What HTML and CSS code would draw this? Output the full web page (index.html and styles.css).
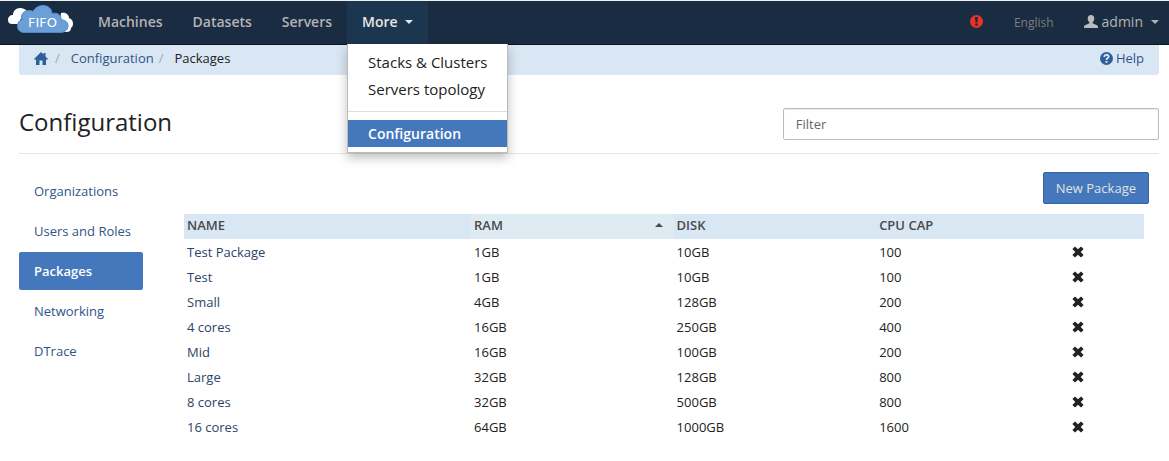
FILE: index.html
```html
<!DOCTYPE html>
<html lang="en">
<head>
<meta charset="utf-8">
<title>FIFO - Packages</title>
<link rel="stylesheet" href="styles.css">
</head>
<body>
<svg class="sprite" aria-hidden="true">
  <symbol id="remove" viewBox="0 0 12 12"><path d="M3 .4 6 3.3 9 .4 11.6 3 8.700 6l2.900 3L9 11.600 6 8.700 3 11.600.4 9l2.900-3L.4 3z"/></symbol>
</svg>
<header class="navbar">
  <a class="brand" href="#" aria-label="FIFO">
    <svg width="66" height="30" viewBox="0 0 66 30">
      <path fill="#fff" d="M12 19H4c-2 0-4-1-4-4 0-3 2-5 5-5C5 6 8 3 12 3c3 0 5 1 7 3l-7 9zM53 8c4-1 8 1 8 5 3 1 4 3 4 6 0 2-1 3-2 4 0 3-2 4-5 4h-7z"/>
      <path fill="#6a9fd8" stroke="#4f8ac8" stroke-width="1" d="M16 27.500c-4 0-6.500-3-6.500-6 0-4 1.500-6 4.500-7-2-5 2-9 7-9 2 0 3 0 4 1 2-4 6-6 10-6 5 0 9 3 9 8 5-1 9 1 9 5v1c5 1 7 3 7 6 0 4-3 7-7 7z"/>
      <text class="brand-text" x="20" y="22">FIFO</text>
    </svg>
  </a>
  <nav class="menu">
    <a class="menu-link" href="#">Machines</a>
    <a class="menu-link" href="#">Datasets</a>
    <a class="menu-link" href="#">Servers</a>
    <div class="dropdown">
      <button class="menu-link open" type="button" aria-expanded="true">More <span class="caret"></span></button>
      <div class="dropdown-menu">
        <a class="dropdown-item" href="#">Stacks &amp; Clusters</a>
        <a class="dropdown-item" href="#">Servers topology</a>
        <hr class="divider">
        <a class="dropdown-item current" href="#">Configuration</a>
      </div>
    </div>
  </nav>
  <div class="account">
    <svg class="alert" width="13" height="13" viewBox="0 0 13 13" role="img" aria-label="Alert"><circle cx="6.5" cy="6.5" r="6.5" fill="#ea3323"/><path fill="#192c42" d="M5 2h3l-.5 5.500h-2zM5.300 8.500h2.400v2.300H5.300z"/></svg>
    <a class="language" href="#">English</a>
    <button class="user" type="button">
      <svg width="14" height="13" viewBox="0 0 14 13"><path fill="#bbb" d="M7 0c2 0 3.300 1.300 3.300 3.500 0 1.800-.8 3-1.700 3.800v1l4.400 2c.8.400 1 1 1 2.700H0c0-1.700.2-2.300 1-2.700l4.400-2v-1c-.9-.8-1.700-2-1.700-3.800C3.700 1.300 5 0 7 0z"/></svg>
      admin <span class="caret"></span>
    </button>
  </div>
</header>
<main class="page">
  <div class="breadcrumb">
    <a class="home" href="#" aria-label="Home"><svg width="14" height="13" viewBox="0 0 14 13"><path fill="#2f5f9b" d="M7 0l2.500 2.500V1h2v3.500L14 7l-1 1-1-1v6H8.500V8.500h-3V13H2V7L1 8 0 7z"/></svg></a>
    <span class="slash">/</span>
    <a class="crumb" href="#">Configuration</a>
    <span class="slash">/</span>
    <span class="crumb-current">Packages</span>
    <a class="help" href="#"><svg width="13" height="13" viewBox="0 0 13 13"><circle cx="6.500" cy="6.500" r="6.500" fill="#2f5f9b"/><path fill="none" stroke="#d9e6f3" stroke-width="1.800" d="M4.300 5c0-3 4.400-2.800 4.400-.4C8.700 6.200 6.500 6 6.500 8"/><path fill="#d9e6f3" d="M5.500 9h2v1.800h-2z"/></svg>Help</a>
  </div>
  <div class="title-row">
    <h1 class="title">Configuration</h1>
    <input class="filter" type="text" placeholder="Filter" aria-label="Filter">
  </div>
  <div class="content">
    <nav class="sidebar">
      <a class="side-link" href="#">Organizations</a>
      <a class="side-link" href="#">Users and Roles</a>
      <a class="side-link active" href="#">Packages</a>
      <a class="side-link" href="#">Networking</a>
      <a class="side-link" href="#">DTrace</a>
    </nav>
    <section class="main">
      <button class="new" type="button">New Package</button>
      <table class="packages">
        <colgroup><col class="col-name"><col class="col-size"><col class="col-size"><col class="col-cap"><col></colgroup>
        <thead><tr><th>NAME</th><th class="sorted" aria-sort="ascending"><span class="sort-label">RAM<span class="sort-arrow"></span></span></th><th>DISK</th><th>CPU CAP</th><th></th></tr></thead>
        <tbody>
          <tr><td><a href="#">Test Package</a></td><td>1GB</td><td>10GB</td><td>100</td><td><button class="remove" type="button" aria-label="Delete Test Package"><svg width="12" height="12"><use href="#remove"/></svg></button></td></tr>
          <tr><td><a href="#">Test</a></td><td>1GB</td><td>10GB</td><td>100</td><td><button class="remove" type="button" aria-label="Delete Test"><svg width="12" height="12"><use href="#remove"/></svg></button></td></tr>
          <tr><td><a href="#">Small</a></td><td>4GB</td><td>128GB</td><td>200</td><td><button class="remove" type="button" aria-label="Delete Small"><svg width="12" height="12"><use href="#remove"/></svg></button></td></tr>
          <tr><td><a href="#">4 cores</a></td><td>16GB</td><td>250GB</td><td>400</td><td><button class="remove" type="button" aria-label="Delete 4 cores"><svg width="12" height="12"><use href="#remove"/></svg></button></td></tr>
          <tr><td><a href="#">Mid</a></td><td>16GB</td><td>100GB</td><td>200</td><td><button class="remove" type="button" aria-label="Delete Mid"><svg width="12" height="12"><use href="#remove"/></svg></button></td></tr>
          <tr><td><a href="#">Large</a></td><td>32GB</td><td>128GB</td><td>800</td><td><button class="remove" type="button" aria-label="Delete Large"><svg width="12" height="12"><use href="#remove"/></svg></button></td></tr>
          <tr><td><a href="#">8 cores</a></td><td>32GB</td><td>500GB</td><td>800</td><td><button class="remove" type="button" aria-label="Delete 8 cores"><svg width="12" height="12"><use href="#remove"/></svg></button></td></tr>
          <tr><td><a href="#">16 cores</a></td><td>64GB</td><td>1000GB</td><td>1600</td><td><button class="remove" type="button" aria-label="Delete 16 cores"><svg width="12" height="12"><use href="#remove"/></svg></button></td></tr>
        </tbody>
      </table>
    </section>
  </div>
</main>
</body>
</html>
```

FILE: styles.css
```css
* { box-sizing: border-box; }
body {
  margin: 0;
  background: #fff;
  color: #222;
  font: 13px/20px "Open Sans", "Noto Sans", sans-serif;
}
a { color: inherit; text-decoration: none; }
button { margin: 0; border: 0; background: none; color: inherit; font: inherit; cursor: pointer; }
svg { display: block; }
.sprite { position: absolute; width: 0; height: 0; }

.navbar {
  display: flex;
  height: 45px;
  border-top: 1px solid #eef1f4;
  border-bottom: 1px solid #0c1520;
  background: #192c42;
  color: #b4b4b4;
  font-size: 14px;
}
.brand { padding: 4px 9px 0 8px; }
.brand-text { fill: #fff; font: 13px "DejaVu Sans", sans-serif; }
.menu { display: flex; }
.menu-link { display: flex; align-items: center; height: 43px; padding: 0 15px 1px; font-weight: 600; }
.dropdown { position: relative; }
.open { gap: 7px; background: #1c364f; color: #e6e6e6; }
.caret { border: 4px solid transparent; border-top-color: currentColor; border-bottom: 0; }
.dropdown-menu {
  position: absolute;
  top: 43px;
  left: 0;
  z-index: 1;
  width: 161px;
  padding: 5px 0;
  border: 1px solid #bbb;
  border-top: 0;
  background: #fff;
  box-shadow: 0 5px 10px rgba(0, 0, 0, .25);
  color: #222;
}
.dropdown-item { display: block; padding: 0 20px; font-size: 15px; line-height: 27px; white-space: nowrap; }
.dropdown-item.current { background: #4477bb; color: #fff; font-size: 14px; font-weight: 600; }
.divider { height: 1px; margin: 8px 0; border: 0; background: #ddd; }

.account { display: flex; align-items: center; margin-left: auto; padding: 0 10px 2px 0; }
.alert { margin-right: 31px; }
.language { margin-right: 30px; padding-top: 2px; color: #7c7c7c; font-size: 12px; }
.user { display: flex; align-items: center; gap: 4px; padding: 0; }
.user .caret { margin-left: 4px; }

.page { padding: 0 10px 0 19px; }
.breadcrumb {
  display: flex;
  align-items: center;
  height: 30px;
  padding: 0 15px 4px;
  border-radius: 0 0 3px 3px;
  background: #d9e6f3;
  color: #222;
}
.slash { margin: 0 11px 0 7px; color: #aaa; }
.crumb + .slash { margin-left: 5px; }
.crumb { color: #2f5587; }
.help { display: flex; align-items: center; gap: 3px; margin-left: auto; color: #2f5587; }
.title-row {
  display: flex;
  align-items: center;
  justify-content: space-between;
  padding: 33px 0 13px;
  border-bottom: 1px solid #e5e5e5;
}
.title { margin: 0; padding-bottom: 4px; font-size: 24px; font-weight: 400; line-height: 28px; }
.filter {
  width: 33%;
  height: 32px;
  padding: 0 12px;
  border: 1px solid #bbb;
  border-radius: 2px;
  box-shadow: inset 0 1px 1px rgba(0, 0, 0, .08);
  color: #555;
  font: inherit;
}
.filter::placeholder { color: #666; }

.content { display: flex; gap: 41px; padding-top: 18px; }
.sidebar { display: flex; flex: 0 0 124px; flex-direction: column; gap: 2px; min-width: 0; }
.side-link { padding: 9px 0 9px 15px; border-radius: 2px; color: #2f5587; white-space: nowrap; }
.side-link.active { background: #4477bb; color: #fff; font-weight: 600; }
.main { display: flex; flex: 1; flex-direction: column; padding-right: 15px; }
.new {
  align-self: flex-end;
  height: 32px;
  margin: 0 -5px 10px 0;
  padding: 0 12px;
  border: 1px solid #3565a8;
  border-radius: 2px;
  background: #4477bb;
  color: #e2e2e2;
}
.packages { width: 100%; border-collapse: collapse; table-layout: fixed; }
.col-name { width: 29.9%; }
.col-size { width: 21.1%; }
.col-cap { width: 20.1%; }
.packages th, .packages td { height: 25px; padding: 0 3px; text-align: left; }
.packages th { padding-bottom: 3px; background: #d9e6f3; color: #4a4a4a; font-weight: 600; }
.packages .sorted { background: #dfebf2; }
.packages a { color: #2b4468; }
.sort-label { display: flex; align-items: center; justify-content: space-between; padding-right: 8px; }
.sort-arrow { border: 4px solid transparent; border-bottom-color: currentColor; border-top: 0; }
.remove { display: block; padding: 0; color: #222; }
.remove svg { fill: currentColor; }
```
